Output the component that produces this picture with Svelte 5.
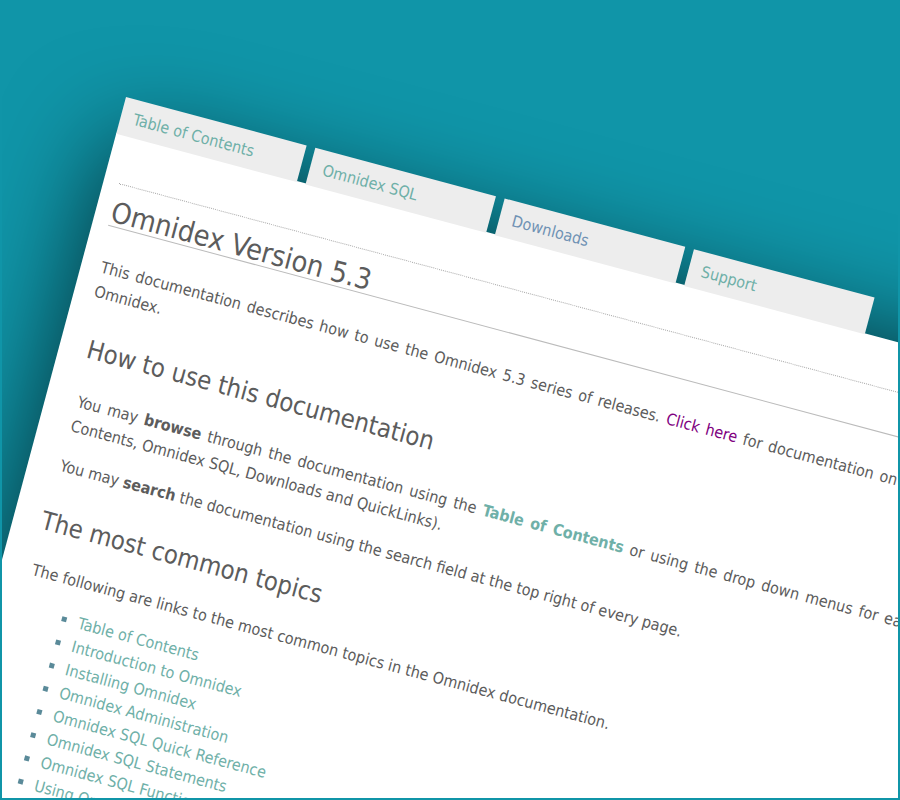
<script>
  const tabs = [
    { label: "Table of Contents" },
    { label: "Omnidex SQL" },
    { label: "Downloads", visited: true },
    { label: "Support" }
  ];
  const topics = [
    "Table of Contents",
    "Introduction to Omnidex",
    "Installing Omnidex",
    "Omnidex Administration",
    "Omnidex SQL Quick Reference",
    "Omnidex SQL Statements",
    "Omnidex SQL Functions",
    "Using Omnidex"
  ];
</script>

<div class="frame">
  <div class="sheet">
    <nav class="tabs">
      {#each tabs as tab}
        <a class="tab" class:visited={tab.visited} href="#top">{tab.label}</a>
      {/each}
    </nav>
    <main class="content">
      <div class="rule"></div>
      <h1>Omnidex Version 5.3</h1>
      <p class="intro">
        This documentation describes how to use the Omnidex 5.3 series of releases.
        <a class="older" href="#top">Click here</a> for documentation on older versions of
        Omnidex.
      </p>
      <section>
        <h2>How to use this documentation</h2>
        <p>
          You may <b>browse</b> through the documentation using the
          <a class="strong" href="#top">Table of Contents</a> or using the drop down menus for each tab (Table of
          Contents, Omnidex SQL, Downloads and QuickLinks).
        </p>
        <p class="tight">You may <b>search</b> the documentation using the search field at the top right of every page.</p>
      </section>
      <section>
        <h2>The most common topics</h2>
        <p class="lead">The following are links to the most common topics in the Omnidex documentation.</p>
        <ul>
          {#each topics as topic}
            <li><a href="#top">{topic}</a></li>
          {/each}
        </ul>
      </section>
    </main>
  </div>
</div>

<style>
  :global(body) {
    margin: 0;
  }

  .frame {
    width: 900px;
    height: 800px;
    box-sizing: border-box;
    border: 2px solid #1095a8;
    background: #1095a8;
    overflow: hidden;
    font-family: "DejaVu Sans Condensed", "DejaVu Sans", sans-serif;
    font-stretch: condensed;
    color: #5c5c5c;
  }

  .sheet {
    width: 1018px;
    margin: 95px 0 0 124px;
    transform: rotate(15deg);
    transform-origin: 0 0;
  }

  .tabs {
    display: flex;
    gap: 9px;
    margin-bottom: -1px;
    position: relative;
    z-index: 1;
  }

  .tab {
    box-sizing: border-box;
    width: 187px;
    height: 38px;
    padding: 10px 0 0 13px;
    background: #ededed;
    color: #6fb0a8;
    font-size: 16px;
    text-decoration: none;
  }

  .tab.visited {
    color: #6f92b4;
  }

  .content {
    height: 1200px;
    padding: 48px 16px 0;
    background: #fff;
    box-shadow: 0 0 100px rgba(0, 0, 0, 0.66);
  }

  .rule {
    border-top: 1px dotted #aaa;
  }

  h1 {
    margin: 14px 0 0;
    border-bottom: 1px solid #bbb;
    font-size: 28.7px;
    font-weight: normal;
    line-height: 28px;
  }

  section {
    padding-left: 12px;
  }

  h2 {
    margin: 28px 0 0;
    font-size: 25.5px;
    font-weight: normal;
    line-height: 34px;
  }

  section + section h2 {
    margin-top: 28px;
  }

  p {
    margin: 24px 0 0 4px;
    font-size: 16px;
    line-height: 25px;
    text-align: justify;
  }

  p.intro {
    margin: 29px 28px 0 4px;
  }

  p.tight {
    margin-top: 16px;
  }

  p.lead {
    margin-top: 21px;
  }

  a {
    color: #6fb0a8;
    text-decoration: none;
  }

  a.older {
    color: #800080;
  }

  a.strong {
    font-weight: bold;
  }

  ul {
    margin: 16px 0 0;
    padding: 0 0 0 62px;
    list-style: square;
  }

  li {
    font-size: 16px;
    line-height: 24px;
    color: #5a8a99;
  }
</style>
